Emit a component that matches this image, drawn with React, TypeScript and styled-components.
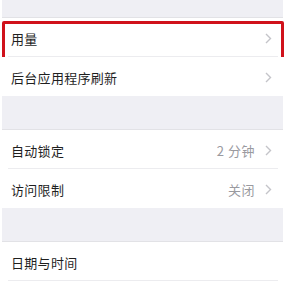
import React from "react";
import styled, { createGlobalStyle } from "styled-components";

const GlobalStyle = createGlobalStyle`
  html, body { margin: 0; padding: 0; background: #ffffff; }
  body { font-family: "Noto Sans CJK SC", "Noto Sans", sans-serif; }
`;

const Screen = styled.div`
  width: 288px;
  height: 281px;
  overflow: hidden;
  background: #ffffff;
  display: flex;
  flex-direction: column;
`;

const Gap = styled.div<{ $h: number }>`
  height: ${(p) => p.$h}px;
  margin: 0 5px 0 2px;
  background: #efeff4;
  border-bottom: 1px solid #e2e2e6;
  flex-shrink: 0;
`;

const Row = styled.div<{ $sep?: boolean }>`
  position: relative;
  height: 39px;
  flex-shrink: 0;
  display: flex;
  align-items: center;
  padding: 2px 16px 0 11px;
  box-sizing: border-box;
  background: #ffffff;
  &::after {
    content: "";
    display: ${(p) => (p.$sep ? "block" : "none")};
    position: absolute;
    left: 8px;
    right: 10px;
    bottom: 0;
    height: 1px;
    background: #ececef;
  }
`;

const Label = styled.span`
  flex: 1;
  font-size: 13px;
  color: #1f1f1f;
  letter-spacing: 0.3px;
`;

const Value = styled.span`
  font-size: 13px;
  color: #9a9a9f;
  margin-right: 10px;
  letter-spacing: 0.5px;
`;

const Highlight = styled.div`
  position: absolute;
  top: 3px;
  bottom: -5px;
  left: 2px;
  right: 4px;
  border: 3px solid #d0111b;
  border-radius: 2px;
  pointer-events: none;
`;

const Chevron = () => (
  <svg width="7" height="11" viewBox="0 0 7 11" fill="none">
    <path d="M1 1l4.5 4.5L1 10" stroke="#c4c4c9" strokeWidth="1.4" />
  </svg>
);

export default function App() {
  return (
    <>
      <GlobalStyle />
      <Screen>
        <Gap $h={17} />
        <Row $sep>
          <Label>用量</Label>
          <Chevron />
          <Highlight />
        </Row>
        <Row>
          <Label>后台应用程序刷新</Label>
          <Chevron />
        </Row>
        <Gap $h={33} />
        <Row $sep>
          <Label>自动锁定</Label>
          <Value>2 分钟</Value>
          <Chevron />
        </Row>
        <Row>
          <Label>访问限制</Label>
          <Value>关闭</Value>
          <Chevron />
        </Row>
        <Gap $h={33} />
        <Row $sep>
          <Label>日期与时间</Label>
        </Row>
      </Screen>
    </>
  );
}
